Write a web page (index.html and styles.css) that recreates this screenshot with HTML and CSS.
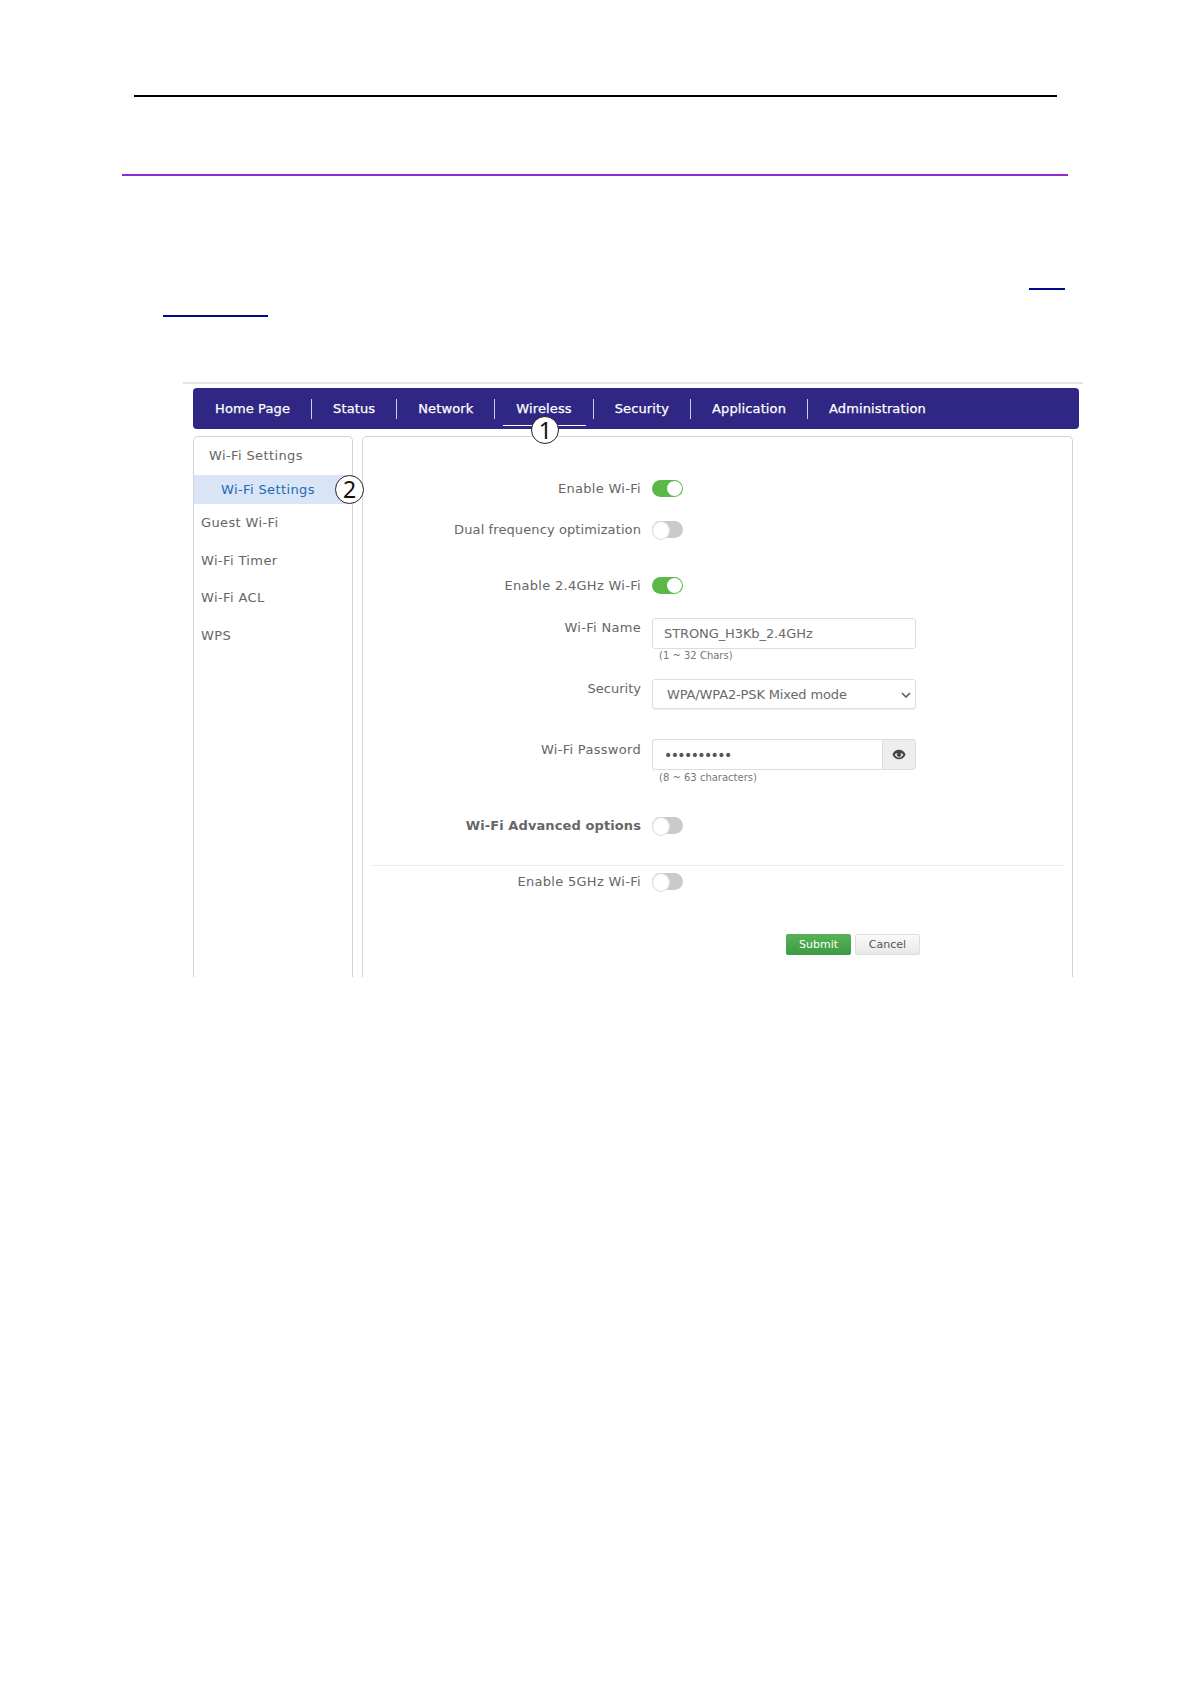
FILE: index.html
```html
<!DOCTYPE html>
<html lang="en">
<head>
<meta charset="utf-8">
<title>Wi-Fi Settings</title>
<link rel="stylesheet" href="styles.css">
</head>
<body>
<main class="page">
  <div class="rule-black"></div>
  <div class="rule-purple"></div>
  <div class="link-one"><a class="blank-link">&nbsp;</a></div>
  <div class="link-two"><a class="blank-link">&nbsp;</a></div>
  <section class="shot">
    <div class="shot-top"></div>
    <nav class="nav">
      <span class="nav-item">Home Page</span>
      <span class="nav-item">Status</span>
      <span class="nav-item">Network</span>
      <span class="nav-item nav-active">Wireless<span class="marker marker-one">1</span></span>
      <span class="nav-item">Security</span>
      <span class="nav-item">Application</span>
      <span class="nav-item nav-last">Administration</span>
    </nav>
    <div class="columns">
      <aside class="side">
        <div class="side-head">Wi-Fi Settings</div>
        <div class="side-sub">Wi-Fi Settings<span class="marker marker-two">2</span></div>
        <div class="side-item">Guest Wi-Fi</div>
        <div class="side-item">Wi-Fi Timer</div>
        <div class="side-item">Wi-Fi ACL</div>
        <div class="side-item">WPS</div>
      </aside>
      <div class="panel">
        <div class="row row-a"><label class="lab">Enable Wi-Fi</label><span class="toggle on"></span></div>
        <div class="row row-b"><label class="lab lab-tight">Dual frequency optimization</label><span class="toggle"></span></div>
        <div class="row row-c"><label class="lab">Enable 2.4GHz Wi-Fi</label><span class="toggle on"></span></div>
        <div class="row row-top row-name">
          <label class="lab lab-top">Wi-Fi Name</label>
          <div class="ctl"><div class="field">STRONG_H3Kb_2.4GHz</div><div class="hint">(1 ~ 32 Chars)</div></div>
        </div>
        <div class="row row-top row-sec">
          <label class="lab lab-top lab-none">Security</label>
          <div class="ctl"><div class="field select">WPA/WPA2-PSK Mixed mode
            <svg class="chev" width="10" height="6" viewBox="0 0 10 6"><path d="M1 1l4 4 4-4" fill="none" stroke="#555" stroke-width="1.5"/></svg></div></div>
        </div>
        <div class="row row-top row-pass">
          <label class="lab lab-top">Wi-Fi Password</label>
          <div class="ctl">
            <div class="pass"><div class="field dots">••••••••••</div><div class="eye">
              <svg width="14" height="11" viewBox="0 0 14 11"><path d="M.5 5.500C1.500 2.500 4 .8 7 .8s5.500 1.700 6.500 4.700C12.500 8.500 10 10.200 7 10.200S1.500 8.500.5 5.500z" fill="#444"/><path d="M2.600 5.200C4 4.300 5.400 3.900 7 3.900s3 .4 4.400 1.300C10.600 7.400 9 8.700 7 8.700S3.400 7.400 2.600 5.200z" fill="#ddd"/><circle cx="7" cy="5.800" r="2.100" fill="#444"/></svg>
            </div></div>
            <div class="hint hint-low">(8 ~ 63 characters)</div>
          </div>
        </div>
        <div class="row row-adv"><label class="lab lab-bold">Wi-Fi Advanced options</label><span class="toggle"></span></div>
        <div class="divider"></div>
        <div class="row row-five"><label class="lab">Enable 5GHz Wi-Fi</label><span class="toggle"></span></div>
        <div class="actions"><span class="btn btn-ok">Submit</span><span class="btn btn-no">Cancel</span></div>
      </div>
    </div>
  </section>
</main>
</body>
</html>
```
FILE: styles.css
```css
* { box-sizing: border-box; }
html, body { margin: 0; background: #fff; }
body { font-family: "DejaVu Sans", sans-serif; color: #666; }
.page { height: 1684px; overflow: hidden; padding-top: 95px; }

.rule-black { height: 2px; margin: 0 133px 0 134px; background: #000; }
.rule-purple { height: 2px; margin: 77px 122px 0 122px; background: #9428d0; }

.link-one { display: flex; justify-content: flex-end; padding-right: 125px; height: 27px; margin-top: 100px; }
.link-two { display: flex; padding-left: 163px; height: 27px; }
.blank-link { display: block; height: 1.500px; background: #000a8c; margin-top: 12px; }
.link-one .blank-link { width: 36px; }
.link-two .blank-link { width: 105px; }

.shot { margin: 52px 107px 0 183px; height: 587px; }
.shot-top { height: 2px; background: #e4e4e4; }
.nav { display: flex; align-items: center; height: 41px; margin: 4px 4px 0 10px; padding-left: 1px; background: #2f2783; border-radius: 4px; }
.nav-item { position: relative; padding: 0 21px; height: 20px; line-height: 20px; border-right: 1px solid #cfcde6; color: #fff; font-size: 13px; letter-spacing: 0.12px; -webkit-text-stroke: 0.25px #fff; white-space: nowrap; }
.nav-last { border-right: 0; }
.nav-active::after { content: ""; position: absolute; left: 8px; right: 7px; top: 26px; height: 1.500px; background: #fff; }
.marker { position: absolute; z-index: 2; display: flex; align-items: center; justify-content: center; width: 28px; height: 28px; border: 1px solid #222; border-radius: 50%; background: #fff; color: #111; font-family: "Noto Sans", sans-serif; font-size: 23px; font-weight: 400; letter-spacing: 0; -webkit-text-stroke: 0; }
.marker-one { left: 36px; top: 17px; }
.marker-two { right: -12px; top: 0; width: 29px; height: 29px; }

.columns { display: flex; gap: 9px; margin: 7px 0 0 10px; height: 541px; }
.side, .panel { border: 1px solid #d4d4d4; border-bottom: 0; border-radius: 5px 5px 0 0; }
.side { width: 160px; font-size: 13px; letter-spacing: 0.38px; }
.side-head { height: 38px; padding: 10px 0 0 15px; line-height: 18px; }
.side-sub { position: relative; height: 29px; padding-left: 27px; line-height: 29px; background: #d9e5f6; color: #1b6bb5; }
.side-item { height: 37.500px; padding: 9px 0 0 7px; line-height: 20px; }
.panel { width: 711px; font-size: 13px; }

.row { display: flex; align-items: center; }
.lab { width: 278px; text-align: right; white-space: nowrap; letter-spacing: 0.3px; }
.lab-tight { letter-spacing: 0.1px; }
.lab-none { letter-spacing: 0; }
.lab-bold { font-weight: 700; letter-spacing: 0.1px; }
.row-top { align-items: flex-start; }
.lab-top { padding-top: 1px; line-height: 18px; }
.row-a { margin-top: 42px; height: 18px; }
.row-b { margin-top: 23px; height: 18px; }
.row-c { margin-top: 38px; height: 18px; }
.row-name { margin-top: 24px; }
.row-sec { margin-top: 16px; }
.row-pass { margin-top: 30px; }
.row-pass .lab-top { padding-top: 2px; }
.row-adv { margin-top: 31px; height: 18px; }
.row-five { margin-top: 6px; height: 18px; }

.toggle { position: relative; flex: none; width: 31px; height: 17px; margin-left: 11px; border-radius: 9px; background: #cacaca; }
.toggle::after { content: ""; position: absolute; left: 0; top: 0; width: 16px; height: 17px; border: 1px solid #ddd; border-radius: 50%; background: #fff; }
.toggle.on { background: #5ab946; }
.toggle.on::after { left: 15px; top: 1px; width: 15px; height: 15px; border: 0; }

.ctl { width: 264px; margin-left: 11px; }
.field { display: flex; align-items: center; height: 31px; padding-left: 11px; border: 1px solid #ddd; border-radius: 3px; background: #fff; font-size: 13px; letter-spacing: -0.1px; color: #6a6a6a; font-family: "DejaVu Sans", sans-serif; }
.select { position: relative; padding-left: 14px; height: 30px; letter-spacing: -0.14px; box-shadow: 0 1px 1px #eee; }
.chev { position: absolute; right: 4px; top: 12px; }
.hint { padding-left: 7px; font-size: 10px; line-height: 14px; color: #777; }
.hint-low { margin-top: 1px; }
.pass { display: flex; }
.dots { flex: 1; border-radius: 3px 0 0 3px; border-right: 0; letter-spacing: -1.6px; font-size: 14px; color: #555; }
.eye { display: flex; align-items: center; justify-content: center; width: 34px; height: 31px; background: #eee; border: 1px solid #ddd; border-radius: 0 3px 3px 0; }

.divider { height: 1px; margin: 31px 7px 0 7px; background: #eee; }
.actions { display: flex; gap: 4px; margin-top: 44px; padding-left: 423px; }
.btn { display: flex; align-items: center; justify-content: center; width: 65px; height: 21px; border-radius: 2px; font-size: 11px; }
.btn-ok { background: linear-gradient(#58b258, #3d9b41); color: #fff; }
.btn-no { background: linear-gradient(#fafafa, #e8e8e8); border: 1px solid #ddd; color: #555; }
```
